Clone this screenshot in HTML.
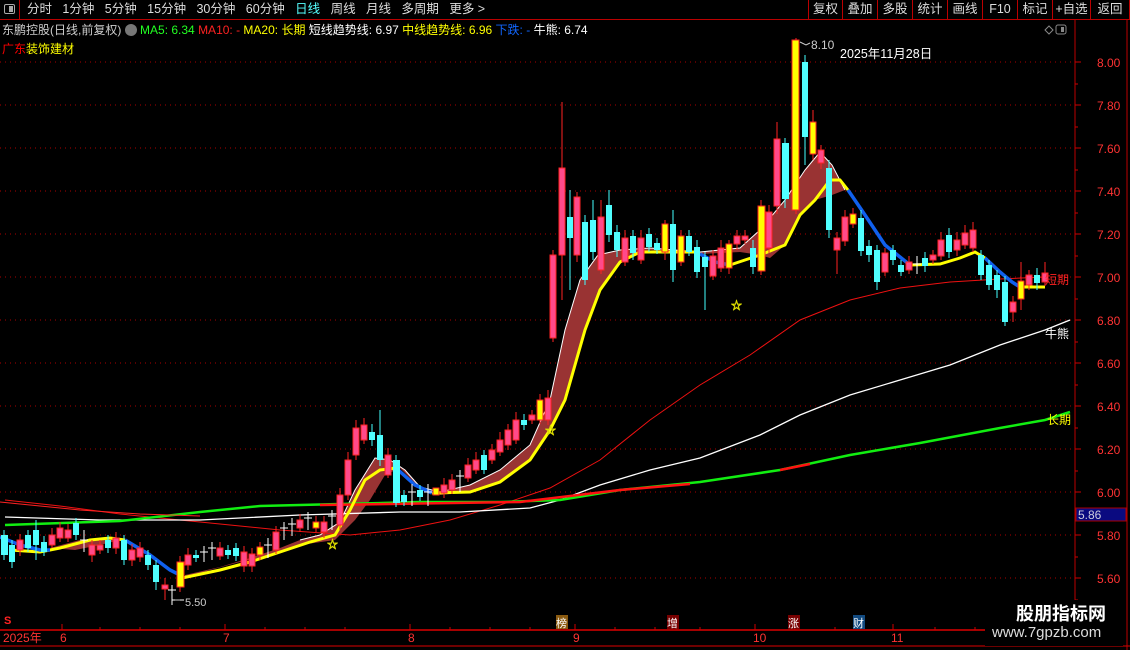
<!DOCTYPE html>
<html><head><meta charset="utf-8"><style>
*{margin:0;padding:0;box-sizing:border-box}
body{width:1130px;height:650px;background:#000;overflow:hidden;font-family:"Liberation Sans","Noto Sans CJK SC",sans-serif;position:relative;color:#ddd}
.t{position:absolute;white-space:nowrap;font-size:12px}
.tb{position:absolute;top:0;height:19px;font-size:12.5px;line-height:19px;color:#ddd}
.btn{position:absolute;top:0;height:19px;border-left:1px solid #b00;font-size:12.5px;line-height:19px;color:#ddd;text-align:center}
</style></head><body>
<div style="position:absolute;left:0;top:19px;width:1130px;height:1px;background:#b00"></div>
<div style="position:absolute;left:0;top:0;width:20px;height:19px;border-right:1px solid #b00"></div>
<div style="position:absolute;left:4px;top:4px;width:11px;height:10px;border:1px solid #aaa;border-radius:2px"><div style="position:absolute;right:1px;top:1px;width:4px;height:6px;background:#aaa"></div></div>
<div class="tb" style="left:27px">分时&nbsp;&nbsp;&nbsp;1分钟&nbsp;&nbsp;&nbsp;5分钟&nbsp;&nbsp;&nbsp;15分钟&nbsp;&nbsp;&nbsp;30分钟&nbsp;&nbsp;&nbsp;60分钟&nbsp;&nbsp;&nbsp;<span style="color:#5ff">日线</span>&nbsp;&nbsp;&nbsp;周线&nbsp;&nbsp;&nbsp;月线&nbsp;&nbsp;&nbsp;多周期&nbsp;&nbsp;&nbsp;更多 &gt;</div>
<div class="btn" style="left:808px;width:34px">复权</div>
<div class="btn" style="left:842px;width:35px">叠加</div>
<div class="btn" style="left:877px;width:35px">多股</div>
<div class="btn" style="left:912px;width:35px">统计</div>
<div class="btn" style="left:947px;width:35px">画线</div>
<div class="btn" style="left:982px;width:35px">F10</div>
<div class="btn" style="left:1017px;width:35px">标记</div>
<div class="btn" style="left:1052px;width:38px">+自选</div>
<div class="btn" style="left:1090px;width:40px;border-right:1px solid #b00">返回</div>

<div class="t" style="left:2px;top:21px;color:#ccc">东鹏控股(日线,前复权) <span style="display:inline-block;width:12px;height:12px;border-radius:6px;background:#777;vertical-align:-2px"></span> <span style="color:#2f2">MA5: 6.34</span> <span style="color:#f22">MA10: -</span> <span style="color:#ff0">MA20: 长期</span> <span style="color:#fff">短线趋势线: 6.97</span> <span style="color:#ff0">中线趋势线: 6.96</span> <span style="color:#16f">下跌: -</span> <span style="color:#fff">牛熊: 6.74</span></div>
<div class="t" style="left:2px;top:40px;color:#f00">广东<span style="color:#ff0">装饰建材</span></div>

<svg style="position:absolute;left:0;top:0" width="1130" height="650">
<g stroke="#b00" fill="none">
<line x1="1075" y1="20" x2="1075" y2="630"/>
<line x1="1127" y1="20" x2="1127" y2="650"/>
<line x1="0" y1="630" x2="1075" y2="630" stroke="#d00" stroke-width="1.5"/>
<line x1="0" y1="646" x2="1130" y2="646" stroke="#d00"/>
</g>
<g stroke="#a00" stroke-dasharray="1 4">
<line x1="0" y1="62" x2="1075" y2="62"/><line x1="0" y1="105" x2="1075" y2="105"/><line x1="0" y1="148" x2="1075" y2="148"/><line x1="0" y1="191" x2="1075" y2="191"/><line x1="0" y1="234" x2="1075" y2="234"/><line x1="0" y1="277" x2="1075" y2="277"/><line x1="0" y1="320" x2="1075" y2="320"/><line x1="0" y1="363" x2="1075" y2="363"/><line x1="0" y1="406" x2="1075" y2="406"/><line x1="0" y1="449" x2="1075" y2="449"/><line x1="0" y1="492" x2="1075" y2="492"/><line x1="0" y1="535" x2="1075" y2="535"/><line x1="0" y1="578" x2="1075" y2="578"/>
</g>
<g stroke="#c00">
<path d="M1075 62h6M1075 105h6M1075 148h6M1075 191h6M1075 234h6M1075 277h6M1075 320h6M1075 363h6M1075 406h6M1075 449h6M1075 492h6M1075 535h6M1075 578h6M1075 84h3M1075 127h3M1075 170h3M1075 213h3M1075 256h3M1075 299h3M1075 342h3M1075 385h3M1075 428h3M1075 471h3M1075 514h3M1075 557h3M1075 600h3"/>
<path d="M62 630v-6M225 630v-6M410 630v-6M575 630v-6M755 630v-6M893 630v-6M100 630v-3M140 630v-3M180 630v-3M265 630v-3M305 630v-3M345 630v-3M450 630v-3M490 630v-3M530 630v-3M615 630v-3M655 630v-3M700 630v-3M795 630v-3M835 630v-3M935 630v-3M975 630v-3"/>
</g>
<g font-size="12" fill="#f33" font-family="Liberation Sans">
<text x="1097" y="67">8.00</text><text x="1097" y="110">7.80</text><text x="1097" y="153">7.60</text><text x="1097" y="196">7.40</text><text x="1097" y="239">7.20</text><text x="1097" y="282">7.00</text><text x="1097" y="325">6.80</text><text x="1097" y="368">6.60</text><text x="1097" y="411">6.40</text><text x="1097" y="454">6.20</text><text x="1097" y="497">6.00</text><text x="1097" y="540">5.80</text><text x="1097" y="583">5.60</text>
<text x="3" y="642">2025年</text><text x="60" y="642">6</text><text x="223" y="642">7</text><text x="408" y="642">8</text><text x="573" y="642">9</text><text x="753" y="642">10</text><text x="891" y="642">11</text>
</g>
<rect x="1076" y="508" width="50" height="13" fill="#0a0a80" stroke="#a00"/>
<text x="1078" y="519" font-size="12" fill="#ccd">5.86</text>

<!-- band -->
<path d="M300 540 L320 535 L340 522 L355 490 L375 458 L390 460 L405 470 L420 487 L440 492 L470 485 L500 470 L530 445 L550 400 L565 330 L580 280 L598 255 L620 250 L650 248 L700 252 L740 248 L760 230 L785 200 L805 170 L820 152 L832 165 L845 190 L832 195 L815 200 L800 215 L785 245 L770 258 L760 255 L740 252 L700 254 L650 250 L620 262 L600 290 L585 330 L565 400 L550 430 L530 460 L500 482 L470 492 L440 495 L420 488 L400 468 L385 475 L370 500 L355 520 L335 540 L300 545 Z" fill="#993333"/>
<polyline points="300,540 320,535 340,522 355,490 375,458 390,460 405,470 420,487 440,492 470,485 500,470 530,445 550,400 565,330 580,280 598,255 620,250 650,248 700,252 740,248 760,230 785,200 805,170 820,152 832,165 845,190" fill="none" stroke="#fff" stroke-width="1"/>
<path d="M185 575 L220 567 L250 558 L280 548 L300 540 L300 545 L270 555 L240 562 L210 570 L185 578Z" fill="#993333"/>
<path d="M50 548 L80 540 L110 538 L120 540 L100 545 L75 550 Z" fill="#993333"/>

<!-- MA lines -->
<polyline points="5,500 60,506 120,514 200,522 280,530 350,535 400,530 450,520 500,505 550,488 600,460 650,420 700,385 750,355 800,320 850,300 900,288 950,282 1000,279 1045,277" fill="none" stroke="#e11" stroke-width="1"/>
<polyline points="5,517 100,520 200,520 300,515 400,512 460,512 530,508 560,500 600,485 650,470 700,458 760,435 800,415 850,395 900,380 950,365 1000,345 1045,330 1070,320" fill="none" stroke="#fff" stroke-width="1.3"/>
<polyline points="5,525 120,521 200,512 260,506 340,504 420,502 500,502 560,500 620,490 700,482 780,470 850,455 920,443 1000,428 1045,420 1070,412" fill="none" stroke="#1e1" stroke-width="2.5"/>
<polyline points="0,502 80,510 140,514 200,516" fill="none" stroke="#f22" stroke-width="1"/>
<path d="M320 505 L520 502 L620 490 L690 484 M780 470 L810 464" stroke="#f11" stroke-width="2.5" fill="none"/>
<!-- yellow trend -->
<polyline points="10,550 40,552 60,548 90,540 110,538 125,540" fill="none" stroke="#ff0" stroke-width="3"/>
<polyline points="182,578 220,570 250,562 280,552 310,542 335,535 350,510 365,480 380,470 396,468" fill="none" stroke="#ff0" stroke-width="3"/>
<polyline points="432,493 470,492 500,482 530,460 550,430 565,400 585,330 600,290 620,262 640,252 670,252 700,252" fill="none" stroke="#ff0" stroke-width="3"/>
<polyline points="730,265 760,255 785,245 800,215 815,200 830,180 840,180 848,190" fill="none" stroke="#ff0" stroke-width="3"/>
<polyline points="910,265 940,264 960,258 975,252 985,258" fill="none" stroke="#ff0" stroke-width="3"/>
<polyline points="1020,287 1045,287" fill="none" stroke="#ff0" stroke-width="3"/>
<!-- blue -->
<g fill="none" stroke="#1060ee" stroke-width="3.5">
<polyline points="0,537 20,545 40,550 50,550"/>
<polyline points="125,540 150,555 170,570 182,576"/>
<polyline points="396,468 415,485 432,493"/>
<polyline points="700,254 715,262 730,265"/>
<polyline points="848,190 865,215 885,245 910,265"/>
<polyline points="985,258 1000,272 1012,282 1020,287"/>
</g>

<!-- candles wicks -->
<path stroke="#f22" stroke-width="1" d="M20 534v22M52 528v20M60 522v20M68 524v18M92 540v22M100 540v14M116 532v22M132 544v22M140 542v20M165 578v22M180 556v36M188 548v22M220 542v18M244 546v26M252 548v24M260 542v18M276 526v28M300 514v18M316 516v16M324 516v22M340 488v42M348 452v48M356 420v40M364 418v26M388 448v30M444 478v20M452 474v20M468 458v24M476 452v22M492 444v20M500 432v24M508 424v26M516 412v32M532 410v14M540 394v30M548 390v35M553 250v92M562 102v198M577 192v70M601 200v74M625 230v36M641 230v34M665 220v40M681 230v36M713 250v30M721 240v32M729 240v34M737 230v20M745 230v14M761 200v75M769 205v48M777 122v92M796 38v176M813 110v50M821 145v24M837 232v42M845 210v36M853 208v20M885 248v28M909 256v18M933 250v14M941 232v28M957 232v24M965 225v24M973 222v30M1013 296v26M1021 262v48M1029 270v20M1045 262v24"/>
<path stroke="#4ff" stroke-width="1" d="M4 530v30M12 540v28M28 530v22M36 520v40M44 536v20M76 518v22M108 535v18M124 535v30M148 550v20M156 560v30M196 550v12M228 545v14M236 543v18M372 424v22M380 410v56M396 455v52M404 490v16M420 485v16M484 450v24M524 414v16M570 190v100M585 215v70M593 200v60M609 190v52M617 225v32M633 230v30M649 228v24M657 238v16M673 210v72M689 230v26M697 240v38M705 252v58M753 240v34M785 138v70M805 55v110M829 160v78M861 210v46M869 240v22M877 245v45M893 245v20M901 260v16M925 252v20M949 228v30M981 250v30M989 260v30M997 270v28M1005 276v50M1037 268v22"/>
<path stroke="#fff" stroke-width="1" d="M84 530v22M80 540h8M172 585v20M168 590h8M204 546v16M200 552h8M212 542v18M208 548h8M268 538v20M264 545h8M284 522v18M280 528h8M292 518v18M288 524h8M308 512v18M304 518h8M332 510v20M328 516h8M412 484v22M408 492h8M428 484v22M424 492h8M460 470v22M456 476h8M917 256v18M913 264h8M172 600h12"/>
<g fill="#ff4a8a" stroke="#f22" stroke-width="1">
<rect x="17" y="540" width="6" height="10"/><rect x="49" y="535" width="6" height="10"/><rect x="57" y="528" width="6" height="10"/><rect x="65" y="530" width="6" height="8"/><rect x="89" y="545" width="6" height="10"/><rect x="97" y="545" width="6" height="5"/><rect x="113" y="538" width="6" height="10"/><rect x="129" y="550" width="6" height="10"/><rect x="137" y="548" width="6" height="9"/><rect x="162" y="585" width="6" height="4"/><rect x="185" y="555" width="6" height="10"/><rect x="217" y="548" width="6" height="8"/><rect x="241" y="552" width="6" height="14"/><rect x="249" y="554" width="6" height="12"/><rect x="273" y="532" width="6" height="18"/><rect x="297" y="520" width="6" height="8"/><rect x="321" y="522" width="6" height="10"/><rect x="337" y="495" width="6" height="30"/><rect x="345" y="460" width="6" height="35"/><rect x="353" y="428" width="6" height="27"/><rect x="361" y="425" width="6" height="15"/><rect x="385" y="455" width="6" height="20"/><rect x="441" y="485" width="6" height="8"/><rect x="449" y="480" width="6" height="10"/><rect x="465" y="465" width="6" height="13"/><rect x="473" y="460" width="6" height="10"/><rect x="489" y="450" width="6" height="10"/><rect x="497" y="440" width="6" height="12"/><rect x="505" y="430" width="6" height="15"/><rect x="513" y="420" width="6" height="20"/><rect x="529" y="415" width="6" height="5"/><rect x="545" y="398" width="6" height="22"/><rect x="550" y="255" width="6" height="83"/><rect x="559" y="168" width="6" height="87"/><rect x="574" y="197" width="6" height="58"/><rect x="598" y="217" width="6" height="53"/><rect x="622" y="238" width="6" height="24"/><rect x="638" y="238" width="6" height="22"/><rect x="710" y="256" width="6" height="20"/><rect x="718" y="248" width="6" height="20"/><rect x="734" y="236" width="6" height="8"/><rect x="742" y="236" width="6" height="4"/><rect x="766" y="212" width="6" height="36"/><rect x="774" y="139" width="6" height="67"/><rect x="818" y="150" width="6" height="13"/><rect x="834" y="238" width="6" height="12"/><rect x="842" y="217" width="6" height="24"/><rect x="882" y="253" width="6" height="19"/><rect x="906" y="262" width="6" height="8"/><rect x="930" y="255" width="6" height="5"/><rect x="938" y="240" width="6" height="16"/><rect x="954" y="240" width="6" height="10"/><rect x="962" y="233" width="6" height="12"/><rect x="970" y="230" width="6" height="18"/><rect x="1010" y="302" width="6" height="10"/><rect x="1026" y="275" width="6" height="10"/><rect x="1042" y="273" width="6" height="9"/>
</g>
<g fill="#ff0" stroke="#f22" stroke-width="1">
<rect x="177" y="562" width="7" height="25"/><rect x="257" y="547" width="6" height="8"/><rect x="313" y="522" width="6" height="6"/><rect x="433" y="488" width="6" height="7"/><rect x="537" y="400" width="6" height="20"/><rect x="662" y="224" width="6" height="28"/><rect x="678" y="236" width="6" height="26"/><rect x="726" y="244" width="6" height="24"/><rect x="758" y="206" width="7" height="65"/><rect x="792" y="40" width="7" height="170"/><rect x="810" y="122" width="6" height="32"/><rect x="850" y="214" width="6" height="10"/><rect x="1018" y="281" width="6" height="18"/>
</g>
<g fill="#50ffff">
<rect x="1" y="535" width="7" height="20"/><rect x="9" y="545" width="6" height="17"/><rect x="25" y="535" width="6" height="13"/><rect x="33" y="530" width="6" height="15"/><rect x="41" y="542" width="6" height="10"/><rect x="73" y="523" width="6" height="12"/><rect x="105" y="540" width="6" height="8"/><rect x="121" y="540" width="6" height="20"/><rect x="145" y="555" width="6" height="10"/><rect x="153" y="565" width="6" height="17"/><rect x="193" y="555" width="6" height="3"/><rect x="225" y="550" width="6" height="5"/><rect x="233" y="548" width="6" height="8"/><rect x="369" y="432" width="6" height="8"/><rect x="377" y="435" width="6" height="25"/><rect x="393" y="460" width="7" height="43"/><rect x="401" y="495" width="6" height="7"/><rect x="417" y="490" width="6" height="7"/><rect x="481" y="455" width="6" height="15"/><rect x="521" y="420" width="6" height="5"/><rect x="567" y="217" width="6" height="21"/><rect x="582" y="222" width="6" height="58"/><rect x="590" y="220" width="6" height="32"/><rect x="606" y="205" width="6" height="30"/><rect x="614" y="232" width="6" height="18"/><rect x="630" y="236" width="6" height="17"/><rect x="646" y="234" width="6" height="13"/><rect x="654" y="243" width="6" height="7"/><rect x="670" y="224" width="6" height="46"/><rect x="686" y="236" width="6" height="16"/><rect x="694" y="247" width="6" height="25"/><rect x="702" y="257" width="6" height="10"/><rect x="750" y="248" width="6" height="19"/><rect x="782" y="143" width="7" height="56"/><rect x="802" y="62" width="6" height="75"/><rect x="826" y="168" width="6" height="62"/><rect x="858" y="218" width="6" height="33"/><rect x="866" y="246" width="6" height="9"/><rect x="874" y="250" width="6" height="32"/><rect x="890" y="250" width="6" height="10"/><rect x="898" y="265" width="6" height="7"/><rect x="922" y="258" width="6" height="8"/><rect x="946" y="235" width="6" height="17"/><rect x="978" y="255" width="6" height="20"/><rect x="986" y="265" width="6" height="20"/><rect x="994" y="275" width="6" height="15"/><rect x="1002" y="282" width="6" height="40"/><rect x="1034" y="275" width="6" height="8"/>
</g>
<g fill="none" stroke="#ee0" font-size="11">
<text x="731" y="309" fill="none" stroke="#dd0" stroke-width="0.7">☆</text>
<text x="545" y="434" fill="none" stroke="#dd0" stroke-width="0.7">☆</text>
<text x="327" y="548" fill="none" stroke="#dd0" stroke-width="0.7">☆</text>
</g>
<path d="M800 42 l6 3 l4 -2" stroke="#ccc" fill="none"/>
<text x="811" y="49" font-size="12" fill="#ccc">8.10</text>
<text x="840" y="58" font-size="12.5" fill="#fff">2025年11月28日</text>
<path d="M175 600h5" stroke="#ccc"/>
<text x="185" y="606" font-size="11" fill="#ccc">5.50</text>
<text x="1045" y="284" font-size="12" fill="#f22">短期</text>
<text x="1045" y="338" font-size="12" fill="#fff">牛熊</text>
<text x="1047" y="424" font-size="12" fill="#ff0">长期</text>
<path d="M1045 30 l4 -4 4 4 -4 4z" stroke="#888" fill="none"/>
<rect x="1056" y="25" width="10" height="9" rx="2" stroke="#888" fill="none"/><rect x="1061" y="27" width="3" height="5" fill="#888"/>
<text x="4" y="624" font-size="11" fill="#f22" font-weight="bold">S</text>
<rect x="556" y="615" width="12" height="14" fill="#8a5a10"/><text x="556" y="627" font-size="11" fill="#fff">榜</text>
<rect x="667" y="615" width="12" height="14" fill="#700"/><text x="667" y="627" font-size="11" fill="#fff">增</text>
<rect x="788" y="615" width="12" height="14" fill="#700"/><text x="788" y="627" font-size="11" fill="#fff">涨</text>
<rect x="853" y="615" width="12" height="14" fill="#124a80"/><text x="853" y="627" font-size="11" fill="#fff">财</text>
</svg>
<div style="position:absolute;left:985px;top:600px;width:138px;height:46px;background:#000"></div>
<div class="t" style="left:1016px;top:600px;font-size:18px;font-weight:bold;color:#fff">股朋指标网</div>
<div class="t" style="left:992px;top:624px;font-size:15px;color:#ddd">www.7gpzb.com</div>
</body></html>
